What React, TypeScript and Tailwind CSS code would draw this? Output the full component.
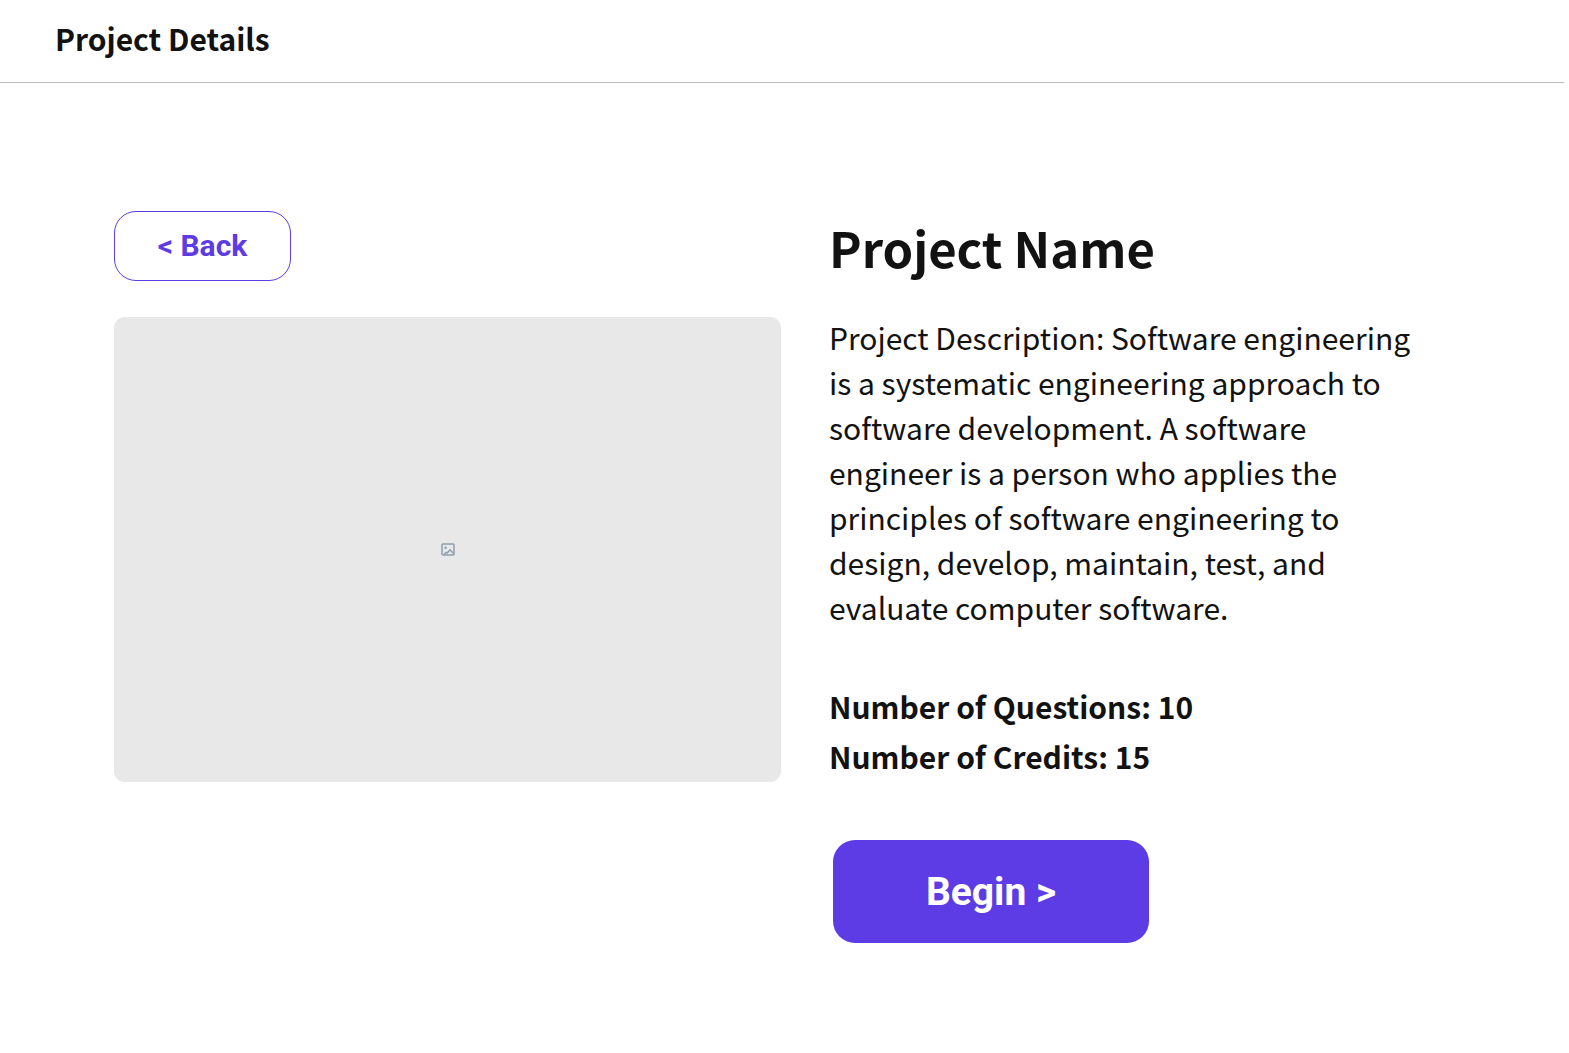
import React from "react";

export default function App() {
  return (
    <div className="min-h-screen bg-white font-['Noto_Sans_CJK_SC',sans-serif] text-[#121212]">
      <header className="mr-[5px] border-b border-[#bdbdbd] pt-[14px] pb-5 pl-[55px]">
        <h1 className="text-[30px] leading-[48px] font-bold">Project Details</h1>
      </header>
      <main className="grid grid-cols-[667fr_740fr] gap-12 pt-32 pl-[114px]">
        <section>
          <button
            type="button"
            className="h-[70px] w-[177px] rounded-[22px] border border-[#5d3be5] font-['Roboto',sans-serif] text-[30px] leading-9 font-bold text-[#5d3be5]"
          >
            &lt; Back
          </button>
          <div className="mt-9 flex h-[465px] items-center justify-center rounded-[11px] bg-[#e8e8e8]">
            <svg viewBox="0 0 14 14" className="h-[14px] w-[14px]" fill="none" stroke="#8d9fab" strokeWidth="1.5">
              <rect x="1" y="1" width="12" height="11" rx="1" />
              <path d="M3.2 11.5 L5 9.3 L6.2 10 L9 6.8 L12.5 10.5" strokeWidth="1.4" />
              <circle cx="4.6" cy="4.7" r="1.2" fill="#8d9fab" stroke="none" />
            </svg>
          </div>
        </section>
        <section>
          <h2 className="text-[49px] leading-[72px] font-bold">Project Name</h2>
          <p className="mt-8 max-w-[600px] text-[30px] leading-[45px]">
            Project Description: Software engineering is a systematic engineering approach to software development. A
            software engineer is a person who applies the principles of software engineering to design, develop,
            maintain, test, and evaluate computer software.
          </p>
          <div className="mt-[51px] text-[30px] leading-[50px] font-bold">
            <p>Number of Questions: 10</p>
            <p>Number of Credits: 15</p>
          </div>
          <button
            type="button"
            className="mt-[59px] ml-1 h-[103px] w-[316px] rounded-[22px] bg-[#5d3be5] font-['Roboto',sans-serif] text-[39px] leading-[48px] font-bold text-white"
          >
            Begin &gt;
          </button>
        </section>
      </main>
    </div>
  );
}
